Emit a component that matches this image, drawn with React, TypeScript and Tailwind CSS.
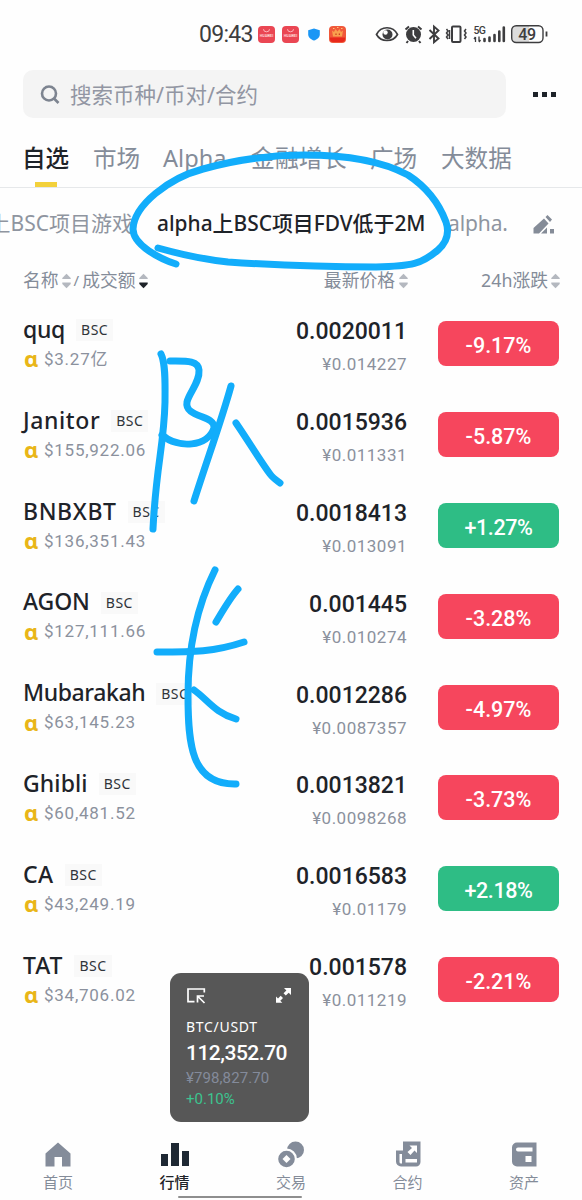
import React from 'react';

const coins = [
  { name: 'quq', vol: '$3.27亿', price: '0.0020011', cny: '¥0.014227', change: '-9.17%', track: 'tracking-[-0.3px]' },
  { name: 'Janitor', vol: '$155,922.06', price: '0.0015936', cny: '¥0.011331', change: '-5.87%', track: 'tracking-[0.6px]' },
  { name: 'BNBXBT', vol: '$136,351.43', price: '0.0018413', cny: '¥0.013091', change: '+1.27%', track: 'tracking-[0.6px]' },
  { name: 'AGON', vol: '$127,111.66', price: '0.001445', cny: '¥0.010274', change: '-3.28%', track: 'tracking-[-0.1px]' },
  { name: 'Mubarakah', vol: '$63,145.23', price: '0.0012286', cny: '¥0.0087357', change: '-4.97%', track: 'tracking-[-0.4px]' },
  { name: 'Ghibli', vol: '$60,481.52', price: '0.0013821', cny: '¥0.0098268', change: '-3.73%', track: 'tracking-[0.1px]' },
  { name: 'CA', vol: '$43,249.19', price: '0.0016583', cny: '¥0.01179', change: '+2.18%', track: 'tracking-[0.5px]' },
  { name: 'TAT', vol: '$34,706.02', price: '0.001578', cny: '¥0.011219', change: '-2.21%', track: 'tracking-[0.9px]' },
];

const Sort = ({ down = false }: { down?: boolean }) => (
  <svg width="9" height="16" viewBox="0 0 9 16" className="shrink-0">
    <path d="M0.3 6V5L4.5 0.8 8.7 5V6Z" fill="#b4b8bf" />
    <path d="M0.3 9.5H8.7V11L4.5 15.2 0.3 11Z" fill={down ? '#1e2329' : '#b4b8bf'} />
  </svg>
);

const AppBadge = () => (
  <svg width="17" height="17" viewBox="0 0 17 17">
    <rect width="17" height="17" rx="4" fill="#ea4653" />
    <path d="M5.5 3.2a3 2.6 0 0 0 6 0" fill="none" stroke="#ffc0c4" strokeWidth="0.9" />
    <text x="8.5" y="11.3" textAnchor="middle" fontSize="3.6" fontWeight="700" fill="#ffd5d5" fontFamily="Roboto, sans-serif">HUAWEI</text>
  </svg>
);

const StatusBar = () => (
  <div className="flex h-[70px] pt-[25px] pl-[199px] font-[Roboto,sans-serif] text-[#3d3d3f]">
    <span className="w-[59px] text-[23px] leading-[20px] tracking-[-0.7px]">09:43</span>
    <div className="-mt-px flex h-[20px] w-[117px] items-center">
      <AppBadge />
      <span className="ml-[7px]"><AppBadge /></span>
      <svg width="12" height="13" viewBox="0 0 12 13" className="ml-[9px]">
        <path d="M6 0.5 11.8 2.2V6.5C11.8 9.5 9 11.5 6 12.6 3 11.5 0.2 9.5 0.2 6.5V2.2Z" fill="#1a96f5" />
      </svg>
      <svg width="17" height="17" viewBox="0 0 17 17" className="ml-[9px]">
        <rect width="17" height="17" rx="4" fill="#f0583a" />
        <path d="M3 4.500 5 6 6.500 3 8.500 5.500 10.500 3 12 6 14 4.500 13 10.500H4Z" fill="#f9a04d" />
        <path d="M4 2.500h1.500M8 1.500h1.500M12 2.500h1.500" stroke="#ffc27a" />
        <path d="M1 11.500H16V13a3 3 0 0 1-3 3H4a3 3 0 0 1-3-3Z" fill="#e8281b" />
        <path d="M6.500 7.500h1v1.500h-1ZM9.800 7.500h1v1.500h-1Z" fill="#c22a14" />
      </svg>
    </div>
    <svg width="174" height="22" viewBox="375 23 174 22" className="-mt-[2px]" fill="none" stroke="#3d3d3f">
      <path d="M376.500 34.500C381 25.500 393 25.500 397.500 34.500 393 42.500 381 42.500 376.500 34.500Z" strokeWidth="1.700" />
      <circle cx="387.500" cy="34.500" r="5" fill="#3d3d3f" stroke="none" />
      <circle cx="385.500" cy="32.500" r="2.200" fill="#fff" stroke="none" />
      <circle cx="413.500" cy="34.500" r="7.500" fill="#3d3d3f" stroke="none" />
      <path d="M405.500 29.500 409 26.500M418 26.500 421.500 29.500M408 41l-1.500 2M419 41l1.500 2" strokeWidth="2" />
      <path d="M413.300 30V35L416 38.200" stroke="#fff" strokeWidth="1.600" />
      <path d="M429.500 30 438.500 38.500 434 42.300V26.500L438.500 30.500 429.500 39" strokeWidth="1.900" />
      <rect x="452" y="26.500" width="8.500" height="15.500" rx="1" strokeWidth="2" />
      <path d="M446.500 29l1.500 2-1.500 2 1.500 2-1.500 2 1.500 2M449.500 30v9M466 29l-1.500 2 1.500 2-1.500 2 1.500 2-1.500 2" strokeWidth="1.500" />
      <text x="473.500" y="33.500" fontSize="10.500" fontWeight="500" fill="#3d3d3f" stroke="none" letterSpacing="-0.800" fontFamily="Roboto, sans-serif">5G</text>
      <path d="M475.500 37v5M474 39l1.500-2M479 36.500v5M479 42l1.500-2" strokeWidth="1.300" />
      <path d="M484.500 39v2M489.500 37.500v3.500M494.500 35v6M499.300 31.500v9.500M503.800 27.500v13.500" strokeWidth="2.600" strokeLinecap="round" />
      <path d="M515.500 25.700H529V42.300H515.500a4 4 0 0 1-4-4V29.700a4 4 0 0 1 4-4Z" fill="#dcdcdc" stroke="none" />
      <rect x="511.700" y="25.700" width="31.300" height="16.800" rx="4.500" strokeWidth="1.400" />
      <path d="M546.500 31.500v5" strokeWidth="1.800" />
      <text x="518.300" y="39.700" fontSize="16" fontWeight="500" fill="#3d3d3f" stroke="none" letterSpacing="-0.500" fontFamily="Roboto, sans-serif">49</text>
    </svg>
  </div>
);

const SearchBar = () => (
  <div className="flex h-[48px] items-center pl-[23px]">
    <div className="flex h-[48px] w-[483px] items-center rounded-[10px] bg-[#f4f4f4] pl-[17px]">
      <svg width="20" height="20" viewBox="0 0 20 20" fill="none" stroke="#7d8490" strokeWidth="2.6">
        <circle cx="9" cy="9.500" r="7" />
        <path d="m14 14.500 4.500 4.500" />
      </svg>
      <span className="ml-[10px] pt-[2px] text-[21.5px] leading-none text-[#9296a3]">搜索币种/币对/合约</span>
    </div>
    <div className="ml-[27px] flex gap-[4px]">
      <i className="size-[5px] bg-[#1e2329]" />
      <i className="size-[5px] bg-[#1e2329]" />
      <i className="size-[5px] bg-[#1e2329]" />
    </div>
  </div>
);

const Tabs = () => (
  <div className="flex h-[70px] border-b border-[#e6e8ea] pt-[22px] pl-[23px] text-[23.6px] leading-[36px] whitespace-nowrap text-[#848c99]">
    <div className="flex w-[70px] flex-col">
      <span className="-ml-px font-medium text-[#1e2329]">自选</span>
      <i className="mt-[6px] ml-[12px] h-[5px] w-[22px] shrink-0 bg-[#f3d13b]" />
    </div>
    <span className="w-[70px]">市场</span>
    <span className="w-[88px]">Alpha</span>
    <span className="w-[119px] text-[23.9px]">金融增长</span>
    <span className="w-[71px]">广场</span>
    <span>大数据</span>
  </div>
);

const Groups = () => (
  <div className="flex h-[70px] items-center pt-[2px] text-[21px] whitespace-nowrap text-[#8f95a0]">
    <div className="flex w-[133px] justify-end overflow-hidden">上BSC项目游戏</div>
    <span className="ml-[24px] w-[268px] text-[20.9px] font-medium text-[#1e2329]">alpha上BSC项目FDV低于2M</span>
    <span className="ml-[23px] w-[60px] tracking-[-0.1px]">alpha.</span>
    <svg width="22" height="20" viewBox="0 0 22 20" className="ml-[25px]" fill="#858c98">
      <path d="M.500 19.500V14L11 4.500 15.500 9.500 6 19.500ZM12.500 3 14.500 1 19 5.500 17 8ZM17 15h4v4.500h-4ZM8 19.500l6-6v6Z" />
    </svg>
  </div>
);

const Nav = () => (
  <div className="mt-auto h-[67px]">
    <div className="flex h-[60px] justify-between px-[42px] text-[15px] leading-[20px] text-[#848c99]">
      <div className="flex w-[32px] flex-col items-center">
        <svg width="26" height="26" viewBox="0 0 26 26" className="mt-[8px] shrink-0" fill="#848c9a">
          <path d="M.500 12.500 13 1.500 25.500 12.500V25.500H17V16H9.500V25.500H.500Z" />
        </svg>
        <span className="mt-[5px]">首页</span>
      </div>
      <div className="flex w-[32px] flex-col items-center text-[#1e2329]">
        <svg width="28" height="26" viewBox="0 0 28 26" className="mt-[8px] shrink-0" fill="#1e2833">
          <path d="M0 13h7v12H0ZM10 2h8v23h-8ZM21 10h7v15h-7Z" />
        </svg>
        <span className="mt-[5px] font-medium">行情</span>
      </div>
      <div className="flex w-[32px] flex-col items-center">
        <svg width="26" height="27" viewBox="0 0 26 27" className="mt-[8px] -mb-px shrink-0" fill="#848c9a">
          <circle cx="17.500" cy="9" r="8.500" />
          <circle cx="8.500" cy="18" r="10.500" fill="#fefefe" />
          <path fillRule="evenodd" d="M8.500 9.700a8.300 8.300 0 1 0 0 16.600 8.300 8.300 0 1 0 0-16.600ZM8.500 14l4 4-4 4-4-4Z" />
        </svg>
        <span className="mt-[5px]">交易</span>
      </div>
      <div className="flex w-[32px] flex-col items-center">
        <svg width="26" height="26" viewBox="0 0 26 26" className="mt-[8px] shrink-0">
          <path d="M8 .500H25.500V21a4.500 4.500 0 0 1-4.500 4.500H6A5 5 0 0 1 1 20.500V9.500H8Z" fill="#848c9a" />
          <path d="M4.500 13H7V22.500H6a1.500 1.500 0 0 1-1.500-1.500ZM10.500 18H22v3.500H10.500ZM14.500 4.500H22V12l-2.500-2.500-4 4.500-3-3 4.500-4Z" fill="#fff" />
        </svg>
        <span className="mt-[5px]">合约</span>
      </div>
      <div className="flex w-[32px] flex-col items-center">
        <svg width="26" height="26" viewBox="0 0 26 26" className="mt-[8px] shrink-0">
          <path d="M6 1.500H25.500V25.500H6A5 5 0 0 1 1 20.500V6.500A5 5 0 0 1 6 1.500Z" fill="#848c9a" />
          <path d="M7 6.500H21.500V10.500H7a2 2 0 0 1 0-4ZM14.500 15h6v6h-6Z" fill="#fff" />
        </svg>
        <span className="mt-[5px]">资产</span>
      </div>
    </div>
    <div className="mt-[3px] ml-[178px] h-[2px] w-[124px] rounded-full bg-[#8e8e8e]" />
  </div>
);

// floating ticker over the list
const Ticker = () => (
  <div className="absolute top-[973px] left-[170px] h-[149px] w-[139px] rounded-[11px] bg-[#575757] px-[16px] pt-[14px] font-[Roboto,sans-serif]">
    <div className="flex h-[18px] justify-between">
      <svg width="20" height="18" viewBox="0 0 20 18" fill="none" stroke="#fff" strokeWidth="1.700">
        <path d="M18.300 5.500V2H2V14.700H8.500M11.500 15.500V9H18M12 9.500l6.500 6.500" />
      </svg>
      <svg width="17" height="17" viewBox="0 0 17 17" className="mr-px" fill="#fff">
        <path d="M9 1h7v7l-2.300-2.300-2.900 2.900-2.300-2.300 2.900-2.900ZM1 9.500l2 2 2.700-2.700 2.300 2.300-2.700 2.700 2 2H1Z" />
      </svg>
    </div>
    <p className="mt-[13px] font-['Noto_Sans',sans-serif] text-[14px] leading-[18px] tracking-[0.8px] text-white"><span className="tracking-[0.7px]">BTC/USDT</span></p>
    <p className="mt-[4px] text-[21px] leading-[26px] font-medium tracking-[-0.5px] text-white">112,352.70</p>
    <p className="mt-[3px] text-[15px] leading-[18px] tracking-[0.1px] text-[#848b9b]">¥798,827.70</p>
    <p className="mt-[3px] text-[15px] leading-[18px] text-[#3cc48f]">+0.10%</p>
  </div>
);

const Marks = () => (
  <svg width="582" height="1200" viewBox="0 0 582 1200" className="pointer-events-none absolute top-0 left-0" fill="none" stroke="#12adfb" strokeWidth="7" strokeLinecap="round" strokeLinejoin="round">
    <path d="M176 264C160 259 133 245 133 229C134 205 169 178 203 169C239 159 277 155 304 155C344 155 382 161 408 175C428 188 440 206 446 222C450 234 446 243 438 250C422 264 412 266 376 267C324 267 273 265 228 262C199 259 176 253 158 248" />
    <path d="M161 354C166 364 165 386 165 402C164 446 156 466 153 529" />
    <path d="M170 361C186 361 198 360 199 370C200 382 189 393 187 402C184 418 216 415 214 428C208 447 178 449 162 435" />
    <path d="M231 386C222 419 207 460 194 501M236 423C249 442 261 462 270 474C273 478 276 480 280 483" />
    <path d="M215 570C195 610 188 655 188 695C188 744 191 785 236 784" />
    <path d="M238 589C230 598 222 612 216 622M157 652C194 652 214 652 244 642M194 690C208 700 215 713 236 719" />
  </svg>
);

export default function App() {
  return (
    <div className="relative flex h-[1200px] w-[582px] flex-col overflow-hidden bg-[#fefefe] font-['Noto_Sans','Noto_Sans_CJK_SC',sans-serif]">
      <StatusBar />
      <SearchBar />
      <Tabs />
      <Groups />
      <div className="flex h-[40px] items-center pt-[5px] pr-[22px] pl-[23px] text-[17.8px] text-[#848c99]">
        <div className="flex w-[200px] items-center">
          名称<span className="ml-[3px]"><Sort /></span>
          <span className="mx-[3px] text-[15px]">/</span>
          成交额<span className="ml-[3px]"><Sort down /></span>
        </div>
        <div className="flex w-[185px] items-center justify-end gap-[4px]">最新价格<Sort /></div>
        <div className="ml-auto flex items-center gap-[3px]">24h涨跌<Sort /></div>
      </div>
      {coins.map((c) => (
        <div key={c.name} className="flex h-[90.9px] shrink-0 px-[23px]">
          <div className="w-[200px] pt-[15px]">
            <div className="flex h-[32px] items-center whitespace-nowrap">
              <span className={`text-[23px] font-medium text-[#1e2329] ${c.track}`}>{c.name}</span>
              <span className="mt-[2px] ml-[11px] bg-[#f9f9f9] px-[5px] text-[14px] leading-[22px] tracking-[0.5px] text-[#2f343a]">BSC</span>
            </div>
            <div className="mt-px flex h-[27px] items-center text-[17px] text-[#8b919d]">
              <b className="w-[19px] shrink-0 pl-px text-[22px] leading-[20px] -mt-[3px] text-[#e9b618]">ɑ</b>
              <span className="ml-[2px] font-[Roboto,'Noto_Sans_CJK_SC',sans-serif] tracking-[0.75px]">{c.vol}</span>
            </div>
          </div>
          <div className="w-[184px] pt-[20px] text-right font-[Roboto,sans-serif]">
            <p className="text-[23px] leading-[28px] font-medium text-[#1e2329]">{c.price}</p>
            <p className="mt-[7px] text-[17px] leading-[22px] tracking-[0.5px] text-[#8b919d]">{c.cny}</p>
          </div>
          <div className={`mt-[23px] ml-auto h-[45px] w-[121px] rounded-[8px] pt-[3px] text-center font-[Roboto,sans-serif] text-[21.5px] leading-[44px] font-medium text-white ${c.change[0] === '-' ? 'bg-[#f6465d]' : 'bg-[#2ebd85] tracking-[-0.4px]'}`}>
            {c.change}
          </div>
        </div>
      ))}
      <Nav />
      <Ticker />
      <Marks />
    </div>
  );
}
